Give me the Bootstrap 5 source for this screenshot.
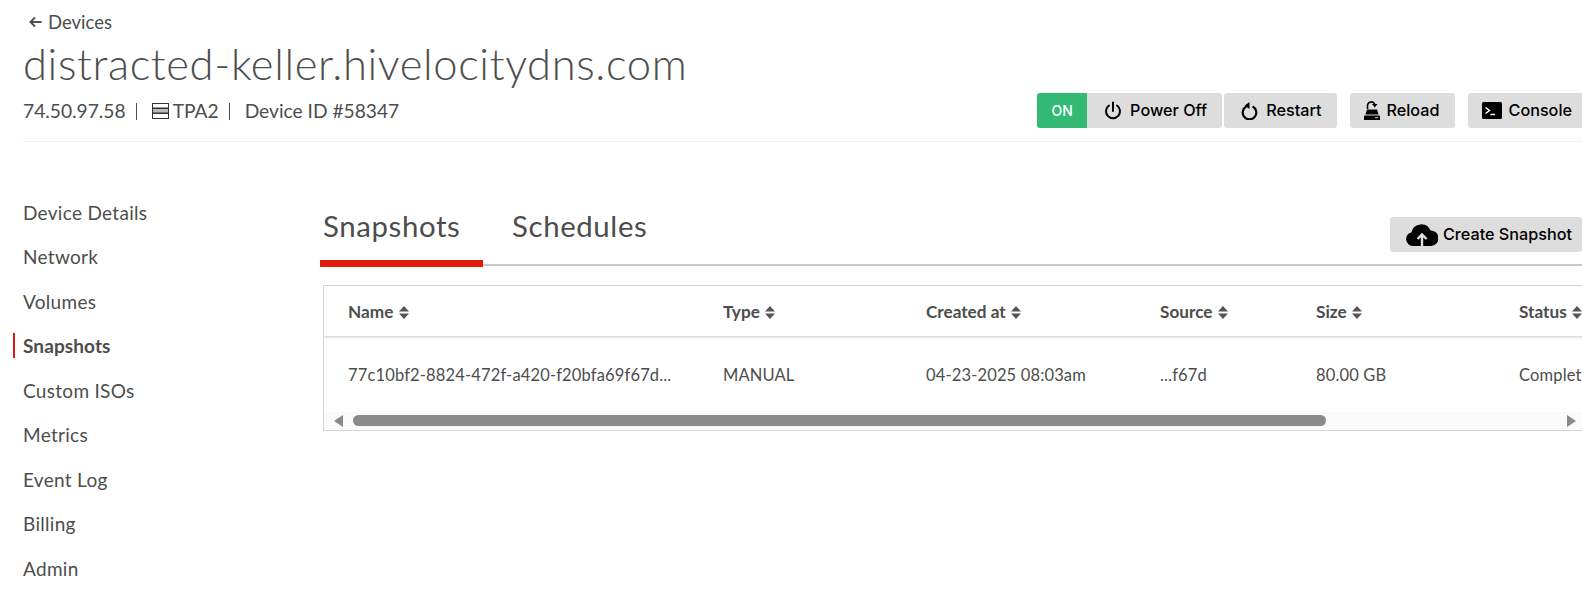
<!DOCTYPE html>
<html lang="en"><head><meta charset="utf-8"><title>Snapshots</title>
<link href="https://cdn.jsdelivr.net/npm/bootstrap@5.3.0/dist/css/bootstrap.min.css" rel="stylesheet">
<style>
html,body{height:595px;overflow:hidden;background:#fff}
body{font-family:Lato,"Liberation Sans",sans-serif;color:#4d4d4d;font-size:18px}
.pg{width:1600px;padding:0 0 0 23px}
.back{display:flex;align-items:center;gap:6px;padding:11px 0 0 6px;height:33px;font-size:18.5px;line-height:22px;color:#4d4d4d;text-decoration:none}
.ttl{font-size:43.5px;font-weight:300;line-height:50px;margin:5px 0 0;color:#4d4d4d;letter-spacing:.62px}
.hdr{border-bottom:1px solid #eee;height:54px;padding-right:13px;align-items:flex-start}
.meta{font-size:19.2px;line-height:22px;padding-top:12px}
.sep{border-left:1px solid #4d4d4d;height:17px;margin:0 15px 0 10px}
.acts{margin-top:5px}
.bt{font-family:Inter,sans-serif;font-weight:500;font-size:16.2px;background:#ddd;color:#000;border:0;border-radius:3px;height:35px;display:inline-flex;align-items:center;gap:7px;padding:0 15px 0 14px;white-space:nowrap}
.gapr{margin-right:13px}
.wide{padding-left:17px;gap:8px}
.on{background:#33b973;color:#fff;border-radius:3px 0 0 3px;width:50px;justify-content:center;font-size:14px;font-weight:500;padding:0}
.off{border-radius:0 3px 3px 0;margin-right:2px}
.side{width:297px;padding-top:48.5px}
.side a{display:block;height:44.5px;line-height:44.5px;color:#4d4d4d;text-decoration:none;font-size:19px;letter-spacing:.3px}
.side a.act{font-weight:700;position:relative;letter-spacing:.1px}
.side a.act::before{content:"";position:absolute;left:-10px;top:9px;width:2px;height:25px;background:#e31b0c}
.mn{flex:1;min-width:0;padding-top:51px}
.tabbar{height:73px;border-bottom:2px solid #c9c9c9;align-items:flex-start;position:relative}
.tb{font-size:29.4px;line-height:40px;padding:13px 3px 0;height:71px;color:#4d4d4d;text-decoration:none;letter-spacing:.62px;margin-right:25px;position:relative}
.tb.act{width:163px;margin-right:26px}
.tb.act::after{content:"";position:absolute;left:0;right:0;bottom:-3px;height:7px;background:#e31b0c}
.crt{margin:24px 0 0 auto;height:35px;padding:0 10px 0 16px;margin-right:18px;gap:5px}
.box{margin:19px 0 0 3px;border:1px solid #d5d5d5;margin-right:0;height:146px;overflow:hidden}
.tbl{margin:0;table-layout:fixed;width:1400px;--bs-table-color:#4d4d4d;border-color:transparent}
.tbl th{height:50px;font-size:17.2px;font-weight:700;padding:2px 0 0 24px;vertical-align:middle;border-bottom:0;white-space:nowrap}
.tbl thead tr{box-shadow:0 1px 3px rgba(0,0,0,.22)}
.tbl td{height:76px;font-size:16.5px;padding:2px 0 0 24px;vertical-align:middle;border:0;white-space:nowrap;letter-spacing:.15px}
.srt{display:inline-block;vertical-align:-1px;margin-left:1px}
.sb{height:17px;background:#fafafa;align-items:center}
.aw{width:0;height:0;border-top:6.5px solid transparent;border-bottom:6.5px solid transparent}
.awl{border-right:9px solid #8a8a8a;margin:0 10px 0 10px}
.thumb{height:11px;background:#8a8a8a;border-radius:6px}
.awr{border-left:9px solid #8a8a8a;margin-left:241px}
</style></head><body>
<div class="pg">
<a class="back" href="#"><svg width="13" height="12" viewBox="0 0 13 12" fill="none" stroke="#4d4d4d" stroke-width="1.9"><path d="M12.500 6H1.500M6 1.500 1.500 6 6 10.500"/></svg>Devices</a>
<h1 class="ttl">distracted-keller.hivelocitydns.com</h1>
<div class="hdr d-flex justify-content-between">
<div class="meta d-flex align-items-center"><span>74.50.97.58</span><span class="sep"></span>
<svg width="17" height="16" viewBox="0 0 17 16" class="me-1"><g fill="#fff" stroke="#333" stroke-width="1"><rect x=".5" y=".5" width="16" height="4.500"/><rect x=".5" y="5.500" width="16" height="4.500" fill="#bbb"/><rect x=".5" y="10.500" width="16" height="5"/></g></svg>
<span>TPA2</span><span class="sep"></span><span>Device ID #58347</span></div>
<div class="acts d-flex">
<span class="bt on">ON</span>
<button class="bt off wide"><svg width="18" height="19" viewBox="0 0 18 19" fill="none" stroke="#000" stroke-width="2" stroke-linecap="round"><path d="M9 1.500V10M5 4.500a7 7 0 1 0 8 0"/></svg>Power Off</button>
<button class="bt gapr wide"><svg width="17" height="19" viewBox="0 0 17 19"><path d="M5.400 5.500A6.800 6.800 0 1 0 11.600 5.500" fill="none" stroke="#000" stroke-width="2.200"/><path d="M8.500 1V8L3.800 4.500Z"/></svg>Restart</button>
<button class="bt gapr"><svg width="16" height="21" viewBox="0 0 16 21"><path d="M3.500 9V5.500a3.800 3.800 0 0 1 7.300-1.300" fill="none" stroke="#000" stroke-width="1.600"/><path d="M8 4h5.500L10.800 7.500Z"/><path d="M3 9.500h10l1.500 5h-13Z"/><path d="M1 15.500h14a1 1 0 0 1 1 1V20H0V16.500a1 1 0 0 1 1-1Z"/><rect x="11" y="17.200" width="3" height="1" fill="#ddd"/></svg>Reload</button>
<button class="bt"><svg width="20" height="17" viewBox="0 0 20 17"><rect width="20" height="17" rx="1.500"/><path d="M3.500 5.500 7.500 8.500 3.500 11.500" fill="none" stroke="#fff" stroke-width="1.500"/><path d="M8.500 12.500h4.500" stroke="#fff" stroke-width="1.500"/></svg>Console</button>
</div></div>
<div class="d-flex">
<nav class="side">
<a href="#">Device Details</a><a href="#">Network</a><a href="#">Volumes</a><a href="#" class="act">Snapshots</a><a href="#">Custom ISOs</a><a href="#">Metrics</a><a href="#">Event Log</a><a href="#">Billing</a><a href="#">Admin</a>
</nav>
<main class="mn">
<div class="tabbar d-flex">
<a href="#" class="tb act">Snapshots</a><a href="#" class="tb">Schedules</a>
<button class="bt crt"><svg width="32" height="24" viewBox="0 0 32 24"><path d="M7.500 23A7 7 0 0 1 5.500 9.200 10 10 0 0 1 24.500 7.500 7.700 7.700 0 0 1 25 23Z"/><path d="M16 24V11.500M11.500 16 16 11.500l4.500 4.500" fill="none" stroke="#ddd" stroke-width="2.400"/></svg>Create Snapshot</button>
</div>
<div class="box">
<table class="table tbl"><colgroup><col style="width:375px"><col style="width:203px"><col style="width:234px"><col style="width:156px"><col style="width:203px"><col></colgroup>
<thead><tr>
<th>Name <svg class="srt" width="10" height="13" viewBox="0 0 10 13" fill="#555"><path d="M5 0 10 5.500H0ZM5 13 0 7.500H10Z"/></svg></th>
<th>Type <svg class="srt" width="10" height="13" viewBox="0 0 10 13" fill="#555"><path d="M5 0 10 5.500H0ZM5 13 0 7.500H10Z"/></svg></th>
<th>Created at <svg class="srt" width="10" height="13" viewBox="0 0 10 13" fill="#555"><path d="M5 0 10 5.500H0ZM5 13 0 7.500H10Z"/></svg></th>
<th>Source <svg class="srt" width="10" height="13" viewBox="0 0 10 13" fill="#555"><path d="M5 0 10 5.500H0ZM5 13 0 7.500H10Z"/></svg></th>
<th>Size <svg class="srt" width="10" height="13" viewBox="0 0 10 13" fill="#555"><path d="M5 0 10 5.500H0ZM5 13 0 7.500H10Z"/></svg></th>
<th>Status <svg class="srt" width="10" height="13" viewBox="0 0 10 13" fill="#555"><path d="M5 0 10 5.500H0ZM5 13 0 7.500H10Z"/></svg></th>
</tr></thead>
<tbody><tr><td>77c10bf2-8824-472f-a420-f20bfa69f67d...</td><td>MANUAL</td><td>04-23-2025 08:03am</td><td>...f67d</td><td>80.00 GB</td><td>Completed</td></tr></tbody>
</table>
<div class="sb d-flex"><span class="aw awl"></span><span class="thumb" style="width:973px"></span><span class="aw awr"></span></div>
</div>
</main>
</div></div>
</body></html>
